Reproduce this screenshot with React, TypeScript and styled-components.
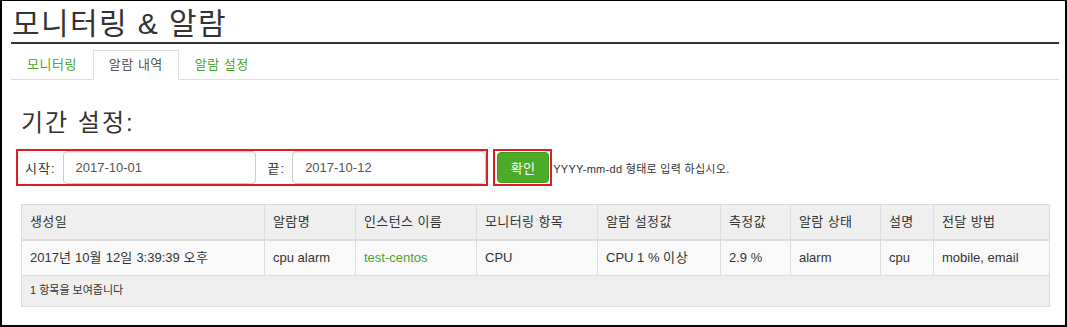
import React from "react";
import styled, { createGlobalStyle } from "styled-components";

const GlobalStyle = createGlobalStyle`
  * { box-sizing: border-box; }
  html, body { margin: 0; padding: 0; background: #fff; }
  body {
    font-family: "Liberation Sans", "Noto Sans CJK KR", sans-serif;
    font-size: 13px;
    color: #333;
  }
`;

const Frame = styled.div`
  width: 1067px;
  height: 327px;
  border-style: solid;
  border-color: #000;
  border-width: 1px 2px 2px 2px;
  padding: 0 6px 0 9px;
  overflow: hidden;
  background: #fff;
`;

const Title = styled.h1`
  margin: 0;
  padding-top: 5px;
  font-size: 30px;
  line-height: 36px;
  font-weight: 400;
  letter-spacing: 1.4px;
  color: #333;
  border-bottom: 2px solid #333;
  padding-left: 1px;
`;

const Tabs = styled.ul`
  display: flex;
  list-style: none;
  margin: 6px 0 0 0;
  padding: 0;
  border-bottom: 1px solid #ddd;
`;

const TabItem = styled.li`
  margin-bottom: -1px;
`;

const TabLink = styled.a<{ $active?: boolean }>`
  display: block;
  padding: 5px 15px;
  line-height: 18px;
  font-size: 13px;
  letter-spacing: 0.5px;
  text-decoration: none;
  cursor: pointer;
  border: 1px solid ${(p) => (p.$active ? "#ddd" : "transparent")};
  border-bottom-color: ${(p) => (p.$active ? "#fff" : "transparent")};
  background: ${(p) => (p.$active ? "#fff" : "transparent")};
  color: ${(p) => (p.$active ? "#555" : "#4aa52c")};
`;

const Section = styled.div`
  padding: 0 10px;
`;

const Heading = styled.h2`
  margin: 26px 0 0 0;
  font-size: 24px;
  line-height: 34px;
  font-weight: 400;
  letter-spacing: 2px;
  color: #333;
`;

const FormRow = styled.div`
  display: flex;
  align-items: center;
  margin: 9px 0 0 -5px;
`;

const Highlight = styled.div<{ $pad?: string; $gap?: number }>`
  display: flex;
  align-items: center;
  height: 37px;
  border: 2px solid #e21c26;
  padding: ${(p) => p.$pad || "0"};
  margin-left: ${(p) => p.$gap ?? 0}px;
`;

const Label = styled.label`
  font-size: 13px;
  letter-spacing: 1px;
  color: #333;
  margin-right: 7px;
`;

const Input = styled.input<{ $w: number; $gapRight?: number }>`
  width: ${(p) => p.$w}px;
  height: 33px;
  padding: 6px 12px;
  font-family: inherit;
  font-size: 13px;
  color: #555;
  border: 1px solid #ccc;
  border-radius: 4px;
  background: #fff;
  box-shadow: inset 0 1px 1px rgba(0, 0, 0, 0.075);
  outline: none;
  margin-right: ${(p) => p.$gapRight ?? 0}px;
`;

const GreenButton = styled.button`
  width: 52px;
  height: 31px;
  padding: 0;
  font-family: inherit;
  font-size: 13px;
  letter-spacing: 0.5px;
  color: #fff;
  background: #4cab29;
  border: 1px solid #3f9a20;
  border-radius: 4px;
  cursor: pointer;
`;

const Hint = styled.span`
  font-size: 11px;
  letter-spacing: 0.3px;
  color: #333;
  margin-left: 1px;
`;

const Table = styled.table`
  margin-top: 18px;
  width: 1028px;
  border-collapse: collapse;
  table-layout: fixed;
  border: 1px solid #ddd;
`;

const Th = styled.th`
  text-align: left;
  font-weight: 400;
  padding: 8px;
  line-height: 18px;
  font-size: 13px;
  letter-spacing: 0.4px;
  color: #333;
  background: #efefef;
  border: 1px solid #ddd;
  border-bottom: 2px solid #ddd;
  white-space: nowrap;
`;

const Td = styled.td`
  padding: 8px;
  line-height: 18px;
  font-size: 13px;
  color: #333;
  background: #f9f9f9;
  border: 1px solid #ddd;
  white-space: nowrap;
`;

const Hangul = styled.span`
  letter-spacing: 0.6px;
`;

const LinkText = styled.a`
  color: #4aa52c;
  text-decoration: none;
`;

const FooterCell = styled.td`
  padding: 7px 8px 8px;
  line-height: 15px;
  font-size: 11px;
  color: #333;
  background: #efefef;
  border: 1px solid #ddd;
`;

const columns = [
  { title: "생성일", w: 243 },
  { title: "알람명", w: 91 },
  { title: "인스턴스 이름", w: 121 },
  { title: "모니터링 항목", w: 121 },
  { title: "알람 설정값", w: 123 },
  { title: "측정값", w: 70 },
  { title: "알람 상태", w: 90 },
  { title: "설명", w: 53 },
  { title: "전달 방법", w: 116 },
];

export default function App() {
  return (
    <>
      <GlobalStyle />
      <Frame>
        <Title>모니터링 &amp; 알람</Title>
        <Tabs>
          <TabItem>
            <TabLink>모니터링</TabLink>
          </TabItem>
          <TabItem>
            <TabLink $active>알람 내역</TabLink>
          </TabItem>
          <TabItem>
            <TabLink>알람 설정</TabLink>
          </TabItem>
        </Tabs>
        <Section>
          <Heading>기간 설정:</Heading>
          <FormRow>
            <Highlight $pad="0 0 0 7px">
              <Label>시작:</Label>
              <Input $w={193} $gapRight={12} defaultValue="2017-10-01" />
              <Label>끝:</Label>
              <Input $w={194} defaultValue="2017-10-12" />
            </Highlight>
            <Highlight $pad="1px 1px 1px 2px" $gap={5}>
              <GreenButton>확인</GreenButton>
            </Highlight>
            <Hint>YYYY-mm-dd 형태로 입력 하십시오.</Hint>
          </FormRow>
          <Table>
            <colgroup>
              {columns.map((c) => (
                <col key={c.title} style={{ width: c.w }} />
              ))}
            </colgroup>
            <thead>
              <tr>
                {columns.map((c) => (
                  <Th key={c.title}>{c.title}</Th>
                ))}
              </tr>
            </thead>
            <tbody>
              <tr>
                <Td>
                  2017<Hangul>년</Hangul> 10<Hangul>월</Hangul> 12
                  <Hangul>일</Hangul> 3:39:39 <Hangul>오후</Hangul>
                </Td>
                <Td>cpu alarm</Td>
                <Td>
                  <LinkText>test-centos</LinkText>
                </Td>
                <Td>CPU</Td>
                <Td>
                  CPU 1 % <Hangul>이상</Hangul>
                </Td>
                <Td>2.9 %</Td>
                <Td>alarm</Td>
                <Td>cpu</Td>
                <Td>mobile, email</Td>
              </tr>
              <tr>
                <FooterCell colSpan={9}>1 항목을 보여줍니다</FooterCell>
              </tr>
            </tbody>
          </Table>
        </Section>
      </Frame>
    </>
  );
}
